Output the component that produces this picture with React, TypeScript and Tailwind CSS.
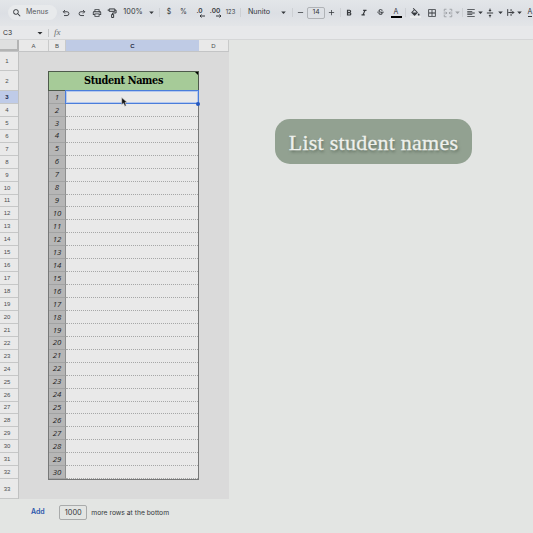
import React from "react";
import {
  MdAdd,
  MdArrowDropDown,
  MdBorderAll,
  MdFormatAlignLeft,
  MdFormatBold,
  MdFormatColorFill,
  MdFormatItalic,
  MdOutlinePrint,
  MdRemove,
  MdSearch,
  MdStrikethroughS,
} from "react-icons/md";

const rows = Array.from({ length: 30 }, (_, i) => i + 1);

// --- Toolbar helpers ---
interface ToolProps {
  className: string;
  children?: React.ReactNode;
}

const Tool: React.FC<ToolProps> = ({ className, children }) => (
  <span className={`flex h-full shrink-0 items-center justify-center ${className}`}>
    {children}
  </span>
);

const Caret: React.FC<{ className: string }> = ({ className }) => (
  <Tool className={className}>
    <MdArrowDropDown className="size-[11px] shrink-0" />
  </Tool>
);

const Divider: React.FC<{ className: string }> = ({ className }) => (
  <Tool className={className}>
    <span className="h-[9px] w-px bg-[#cdd0d4]" />
  </Tool>
);

// --- Icons the icon pack has no close version of ---
const UndoIcon = ({ className = "" }: { className?: string }) => (
  <svg viewBox="0 0 16 16" className={`size-2 ${className}`} fill="none" stroke="currentColor" strokeWidth="1.8">
    <path d="M6 2 2.5 5.5 6 9M2.5 5.5H10a3.6 3.6 0 0 1 0 7.6H4" />
  </svg>
);

const PaintIcon = () => (
  <svg viewBox="0 0 16 16" className="size-[10px]" fill="none" stroke="currentColor" strokeWidth="1.6">
    <path d="M3.5 1.5h9v3.8h-9zM12.5 3.4h2v4.5H9v2.4M7.4 10.3h3.2v4.9H7.4zM3.5 3.4H1" />
  </svg>
);

const MergeIcon = () => (
  <svg viewBox="0 0 16 16" className="size-[10px] text-[#9da0a4]" fill="none" stroke="currentColor" strokeWidth="1.5">
    <path d="M5.5 2H2v3.5M10.5 2H14v3.5M5.5 14H2v-3.5M10.5 14H14v-3.5M1 8h5M15 8h-5M4.5 6l2 2-2 2M11.5 6l-2 2 2 2" />
  </svg>
);

const VerticalAlignIcon = () => (
  <svg viewBox="0 0 16 16" className="size-[10px]" fill="none" stroke="currentColor" strokeWidth="1.6">
    <path d="M3 8h10M8 1v4M8 15v-4" />
    <path d="M5.5 3.2h5L8 5.8zM5.5 12.8h5L8 10.2z" fill="currentColor" stroke="none" />
  </svg>
);

const WrapIcon = () => (
  <svg viewBox="0 0 16 16" className="size-[9px]" fill="none" stroke="currentColor" strokeWidth="1.7">
    <path d="M3 2v12M9 2v4M9 10v4M4 8h10M11.2 5.3 13.9 8l-2.7 2.7" />
  </svg>
);

// Decimal places button: digits with a small arrow under their right end
const DecimalIcon = ({ digits, flip = false }: { digits: string; flip?: boolean }) => (
  <span className="flex flex-col items-end text-[6.5px] font-semibold leading-[6px]">
    {digits}
    <svg viewBox="0 0 12 8" className={`-mr-[2px] h-[4px] w-[6px] ${flip ? "-scale-x-100" : ""}`} fill="none" stroke="currentColor" strokeWidth="2">
      <path d="M12 4H2M5 1 2 4l3 3" />
    </svg>
  </span>
);

const Toolbar = () => (
  <div className="flex h-[26px] w-full items-center overflow-hidden bg-linear-to-b from-[#e3e6e9] via-[#dcdfe4] to-[#e3e5e8] pb-px text-[7px] text-[#35383c]">
    <div className="ml-2 mr-px flex h-[15px] w-[49px] shrink-0 items-center rounded-full bg-[#e8eaec]">
      <MdSearch className="ml-1 size-[10px]" />
      <span className="ml-1 text-[#55585c]">Menus</span>
    </div>
    <Tool className="w-4"><UndoIcon /></Tool>
    <Tool className="w-[15px]"><UndoIcon className="-scale-x-100" /></Tool>
    <Tool className="w-4"><MdOutlinePrint className="size-[10px]" /></Tool>
    <Tool className="w-3.5"><PaintIcon /></Tool>
    <Tool className="w-7 text-[7.3px]">100%</Tool>
    <Caret className="w-2" />
    <Divider className="w-2" />
    <Tool className="w-3">$</Tool>
    <Tool className="w-[17px]">%</Tool>
    <Tool className="w-[15px]"><DecimalIcon digits=".0" /></Tool>
    <Tool className="w-4"><DecimalIcon digits=".00" flip /></Tool>
    <Tool className="w-[15px] text-[5.8px]">123</Tool>
    <Divider className="w-[5px]" />
    <Tool className="w-8 text-[7.2px]">Nunito</Tool>
    <Caret className="w-4" />
    <Divider className="w-0.5" />
    <Tool className="w-3.5"><MdRemove className="size-[9px]" /></Tool>
    <span className="flex h-3 w-[18px] shrink-0 items-center justify-center rounded-[2px] border border-[#b0b3b7] text-[6.8px]">
      14
    </span>
    <Tool className="w-[13px]"><MdAdd className="size-[9px]" /></Tool>
    <Divider className="w-1" />
    <Tool className="w-3.5"><MdFormatBold className="size-[10px]" /></Tool>
    <Tool className="w-4"><MdFormatItalic className="size-[10px]" /></Tool>
    <Tool className="w-4"><MdStrikethroughS className="size-[9px]" /></Tool>
    <Tool className="w-4">
      <span className="flex h-[10px] w-[11px] items-center justify-center border-b-2 border-black text-[7px] leading-none">A</span>
    </Tool>
    <Divider className="w-0.5" />
    <Tool className="w-[18px]">
      <span className="h-[11px] overflow-hidden border-b-2 border-[#eceded]"><MdFormatColorFill className="size-[11px]" viewBox="0 0 24 20" /></span>
    </Tool>
    <Tool className="w-4"><MdBorderAll className="size-[10px]" /></Tool>
    <Tool className="w-[15px]"><MergeIcon /></Tool>
    <Caret className="w-[5px] text-[#9da0a4]" />
    <Divider className="w-1" />
    <Tool className="w-3.5"><MdFormatAlignLeft className="size-[10px]" /></Tool>
    <Caret className="w-[5px]" />
    <Tool className="w-3.5"><VerticalAlignIcon /></Tool>
    <Caret className="w-1.5" />
    <Tool className="w-3.5"><WrapIcon /></Tool>
    <Caret className="w-[5px]" />
    <Tool className="w-4">
      <span className="border-b border-[#35383c] leading-[8px]">A</span>
    </Tool>
  </div>
);

const FormulaBar = () => (
  <div className="flex h-3.5 items-center border-b border-[#d5d6d7] bg-[#e7e8ea] pt-px text-[6.8px] text-[#2c2e31]">
    <span className="w-[34px] pl-[3px]">C3</span>
    <MdArrowDropDown className="size-3" />
    <span className="ml-0.5 h-2 w-px bg-[#c4c6c8]" />
    <span className="ml-[5px] font-['Liberation_Serif',serif] text-[9px] italic text-[#6c6f73]">fx</span>
  </div>
);

const ColumnHeaders = () => (
  <div className="flex h-3 w-[229px] border-b border-[#c3c4c5] bg-[#e9e9e9] text-center font-['Liberation_Sans',sans-serif] text-[6px] leading-[12px] text-[#4a4d50]">
    <span className="w-[19px] border-b-2 border-r-2 border-[#b3b4b4] bg-[#dfe0e0]" />
    <span className="w-[30px] border-r border-[#c9caca]">A</span>
    <span className="w-[17px] border-r border-[#c9caca]">B</span>
    <span className="w-[133px] bg-[#bfcbe5] font-bold text-[#1f2a44]">C</span>
    <span className="w-[30px] border-r border-[#c9caca]">D</span>
  </div>
);

const RowHeader: React.FC<{ n: number; className: string }> = ({ n, className }) => (
  <div
    className={`flex items-center border-b border-[#c6c7c7] pl-[1px] pr-[5px] pt-px text-[6px] ${className} ${
      n === 3 ? "bg-[#bfcbe8] font-bold text-[#16264a]" : "bg-[#e9e9e9] text-[#4c4e50]"
    }`}
  >
    <span className="w-full text-center">{n}</span>
  </div>
);

// --- Student list inside columns B and C ---
const StudentTable = () => (
  <div className="w-[151px]">
    <div className="relative flex h-5 items-center justify-center border border-[#4d5a4b] bg-[#a6cb98] pt-px font-['DejaVu_Serif_Condensed','DejaVu_Serif',serif] text-[10.8px] font-bold tracking-[-0.35px] text-black">
      Student Names
      <span className="absolute right-0 top-0 size-0 border-l-[3px] border-t-[3px] border-l-transparent border-t-black" />
    </div>
    <div className="relative border-b border-l border-r border-[#777878]">
      {rows.map((n) => (
        <div key={n} className="flex h-[12.95px]">
          <span className="flex w-[17px] items-center justify-center border-b border-r border-[#8e8f8f] border-b-[#a2a3a3] bg-[#b6b6b6] pt-px font-['Open_Sans',sans-serif] text-[7.8px] font-medium italic text-[#222]">
            {n}
          </span>
          <span className="flex-1 border-b border-dotted border-[#a6a7a7] bg-[#e9e9e9]" />
        </div>
      ))}
      {/* Selected cell */}
      <div className="absolute -right-px -top-px h-[14px] w-[134px] border border-[#4a7ddb] shadow-[inset_0_0_0_1px_#b4c8ee]">
        <span className="absolute -bottom-[3px] -right-[2px] size-1 rounded-full bg-[#2458c0]" />
      </div>
      <svg viewBox="0 0 12 18" className="absolute left-[72px] top-1.5 h-[10px] w-[7px]">
        <path d="M1 1v13l3.2-3 2.3 5.5 2.6-1.1L6.8 10H11z" fill="#111" stroke="#ddd" strokeWidth="1" />
      </svg>
    </div>
  </div>
);

const Sheet = () => (
  <div className="flex h-[447px] w-[229px] bg-[#dadada]">
    <div className="flex w-[19px] shrink-0 flex-col border-r border-[#c0c1c1] font-['Liberation_Sans',sans-serif]">
      <RowHeader n={1} className="h-[19px]" />
      <RowHeader n={2} className="h-5" />
      {rows.map((n) => (
        <RowHeader key={n} n={n + 2} className="h-[12.95px]" />
      ))}
      <RowHeader n={33} className="flex-1" />
    </div>
    <div className="pl-[29px] pt-[19px]">
      <StudentTable />
    </div>
  </div>
);

const App = () => {
  return (
    <div className="h-[533px] w-[533px] overflow-hidden bg-[#e3e5e3] font-['Inter',sans-serif]">
      <Toolbar />
      <FormulaBar />
      <ColumnHeaders />
      <div className="flex">
        <Sheet />
        <main className="pl-[46px] pt-[67px]">
          <div className="flex h-[45px] w-[197px] items-center justify-center rounded-[15px] bg-[#92a191] pt-0.5 font-['Liberation_Serif',serif] text-[22px] tracking-[0.25px] text-[#eef0ec] [-webkit-text-stroke:0.3px_#eef0ec] [text-shadow:1px_2px_3px_#5d6b5d]">
            List student names
          </div>
        </main>
      </div>

      {/* Add more rows */}
      <div className="flex h-[27px] items-center pl-[31px] text-[7px] text-[#35383b]">
        <span className="font-semibold text-[#2b55ac]">Add</span>
        <span className="ml-[14.5px] flex h-[15px] w-7 items-center justify-center rounded-[2px] border border-[#a9abab] text-[7.4px]">
          1000
        </span>
        <span className="ml-1 pt-[2px] text-[6.75px]">more rows at the bottom</span>
      </div>
    </div>
  );
};

export default App;
